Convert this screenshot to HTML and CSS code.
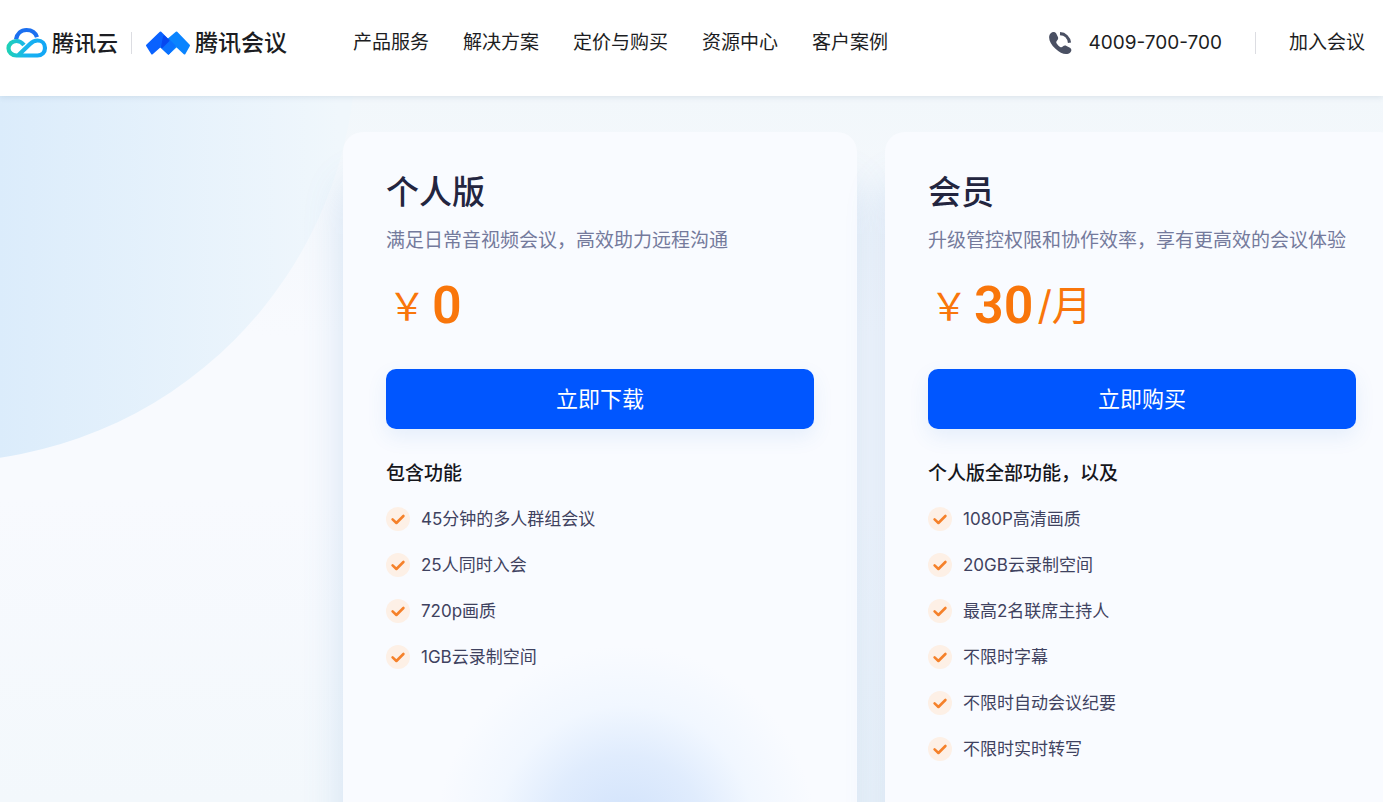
FILE: index.html
```html
<!DOCTYPE html>
<html lang="zh-CN">
<head>
  <meta charset="UTF-8">
  <meta name="viewport" content="width=device-width, initial-scale=1">
  <title>腾讯会议 - 定价与购买</title>
  <link rel="stylesheet" href="styles.css">
</head>
<body>

  <!-- shared icon -->
  <svg class="sprite" aria-hidden="true">
    <symbol id="check" viewBox="0 0 24 24">
      <circle cx="12" cy="12" r="12" fill="#fdf0e6"/>
      <path d="M6.600 12.400l3.800 3.600 7-7" fill="none" stroke="#f5812a" stroke-width="2.600" stroke-linecap="round" stroke-linejoin="round"/>
    </symbol>
  </svg>

  <header class="header">
    <div class="brand">
      <a class="logo" href="#">
        <svg width="42" height="32" viewBox="0 0 42 32" aria-hidden="true">
          <defs>
            <linearGradient id="cloudSide" x1="0" y1="0" x2="1" y2="0">
              <stop offset="0" stop-color="#1fd0b8"/>
              <stop offset="0.5" stop-color="#18b4f0"/>
              <stop offset="1" stop-color="#12a6f5"/>
            </linearGradient>
          </defs>
          <path d="M10 12.500C11 6.500 15 3 20.500 3c5.200 0 9 2.500 10.500 7.200" fill="none" stroke="#1b6ff0" stroke-width="4.200"/>
          <path d="M18 18c-2-2.500-4.500-4-7.500-4-4.500 0-8 3.200-8 7.300s3.500 7.200 8 7.200h21c4.500 0 7.500-3.300 7.500-7.500s-3-7.500-7.500-7.500c-3 0-5 1-7.500 3.500L12 28.500" fill="none" stroke="url(#cloudSide)" stroke-width="4.200"/>
        </svg>
        <span class="logo-cloud">腾讯云</span>
      </a>
      <span class="divider"></span>
      <a class="logo" href="#">
        <svg width="46" height="26" viewBox="0 0 46 26" stroke-width="2" stroke-linejoin="round" aria-hidden="true">
          <path d="M31.500 2.500L44 15.500 39.500 23.500 31.500 16 23.500 23.500 15.500 16z" fill="#0a84ff" stroke="#0a84ff"/>
          <path d="M15.500 2.500L29 16 23.500 23.500 15.500 16 7 23.500 2 15.500z" fill="#0a62ff" stroke="#0a62ff"/>
          <path d="M23.500 10l6 6-6 7.500-7.500-7z" fill="#0a72ff" stroke="#0a72ff"/>
          <path d="M19 6.500l4.500 4-6.500 6.500z" fill="#0648f0" stroke="#0648f0"/>
        </svg>
        <span class="logo-meeting">腾讯会议</span>
      </a>
    </div>

    <nav class="nav">
      <a href="#">产品服务</a>
      <a href="#">解决方案</a>
      <a href="#">定价与购买</a>
      <a href="#">资源中心</a>
      <a href="#">客户案例</a>
    </nav>

    <div class="actions">
      <a class="phone" href="tel:4009700700">
        <svg width="24" height="24" viewBox="0 0 24 24" aria-hidden="true">
          <path d="M2.500 2.500C4.500.6 7 .6 8.200 2.600l1.600 3.200c.8 1.600.3 2.900-.9 4-.8.800-.8 1.700-.2 2.700 1 1.600 2 2.600 3.400 3.400 1 .6 1.900.5 2.700-.3 1-1.100 2.300-1.400 3.700-.7l3 1.500c2.200 1.200 2.500 3.300.8 5-3.300 3.200-9.300 1.700-14.800-3.700C1.500 12.500-.5 6 2.500 2.500z" fill="#4a5063"/>
          <path d="M12 2.700c5 .2 8.800 3.800 9.500 9" fill="none" stroke="#4a5063" stroke-width="3.200"/>
        </svg>
        <span>4009-700-700</span>
      </a>
      <span class="divider"></span>
      <a class="join" href="#">加入会议</a>
    </div>
  </header>

  <main class="pricing">
    <section class="card card-free">
      <h2>个人版</h2>
      <p class="desc">满足日常音视频会议，高效助力远程沟通</p>
      <p class="price"><span class="yen">￥</span><span class="amount">0</span></p>
      <button class="buy" type="button">立即下载</button>
      <h3>包含功能</h3>
      <ul class="features">
        <li><svg class="check"><use href="#check"/></svg>45分钟的多人群组会议</li>
        <li><svg class="check"><use href="#check"/></svg>25人同时入会</li>
        <li><svg class="check"><use href="#check"/></svg>720p画质</li>
        <li><svg class="check"><use href="#check"/></svg>1GB云录制空间</li>
      </ul>
    </section>

    <section class="card">
      <h2>会员</h2>
      <p class="desc">升级管控权限和协作效率，享有更高效的会议体验</p>
      <p class="price"><span class="yen">￥</span><span class="amount">30</span><span class="unit">/月</span></p>
      <button class="buy" type="button">立即购买</button>
      <h3>个人版全部功能，以及</h3>
      <ul class="features">
        <li><svg class="check"><use href="#check"/></svg>1080P高清画质</li>
        <li><svg class="check"><use href="#check"/></svg>20GB云录制空间</li>
        <li><svg class="check"><use href="#check"/></svg>最高2名联席主持人</li>
        <li><svg class="check"><use href="#check"/></svg>不限时字幕</li>
        <li><svg class="check"><use href="#check"/></svg>不限时自动会议纪要</li>
        <li><svg class="check"><use href="#check"/></svg>不限时实时转写</li>
      </ul>
    </section>
  </main>

</body>
</html>
```
FILE: styles.css
```css
:root {
  --blue: #0056ff;
  --orange: #f9760b;
  --ink: #23253f;
  --text: #3f4260;
  --muted: #747a9c;
}

* {
  box-sizing: border-box;
}

body {
  display: flex;
  flex-direction: column;
  min-height: 100vh;
  margin: 0;
  font-family: Inter, "Noto Sans CJK SC", sans-serif;
  line-height: 28px;
  color: var(--text);
  background: #f6fafe;
}

h2, h3, p, ul {
  margin: 0;
  padding: 0;
}

a {
  color: inherit;
  text-decoration: none;
}

.sprite {
  position: absolute;
  width: 0;
  height: 0;
}

/* header */
.header {
  position: relative;
  z-index: 1;
  display: flex;
  align-items: center;
  height: 96px;
  padding: 0 18px 10px 6px;
  font-size: 19px;
  color: #1c1d22;
  background: #fff;
  box-shadow: 0 1px 6px rgba(60, 90, 120, 0.14);
}

.brand {
  display: flex;
  align-items: center;
  gap: 13px;
  width: 347px;
}

.logo {
  display: flex;
  align-items: center;
  gap: 4px;
  font-weight: 500;
}

.logo-cloud {
  font-size: 22px;
}

.logo-meeting {
  font-size: 23px;
}

.divider {
  width: 1px;
  height: 22px;
  background: #dcdde2;
}

.nav {
  display: flex;
  gap: 34px;
}

.actions {
  display: flex;
  align-items: center;
  gap: 33px;
  margin-left: auto;
}

.phone {
  display: flex;
  align-items: center;
  gap: 16px;
}

/* pricing */
.pricing {
  position: relative;
  flex: 1;
  display: grid;
  grid-template-columns: repeat(2, minmax(514px, 1fr));
  gap: 28px;
  padding: 36px 0 0 343px;
  overflow: hidden;
  background: linear-gradient(#f2f7fb, #f8fafe 240px, #f8fafe 400px, #f3f8fc);
}

.pricing::before {
  content: "";
  position: absolute;
  top: -466px;
  left: -476px;
  width: 832px;
  height: 832px;
  border-radius: 50%;
  background: linear-gradient(90deg, #dbecfb 57%, #f0f7fc 98%);
}

.card {
  position: relative;
  padding: 38px 43px 0;
  border-radius: 20px 20px 0 0;
  background: #f9fbff;
  box-shadow: 0 50px 40px rgba(80, 140, 205, 0.2);
}

.card-free {
  background: radial-gradient(circle at 55% 105%, #cfe1fb 0, #e0ecfd 80px, #f1f7ff 130px, #f9fbff 190px);
}

.card h2 {
  font-size: 33px;
  font-weight: 500;
  line-height: 44px;
  color: var(--ink);
}

.desc {
  margin-top: 13px;
  font-size: 19px;
  white-space: nowrap;
  color: var(--muted);
}

.price {
  display: flex;
  align-items: center;
  height: 64px;
  margin-top: 19px;
  line-height: 64px;
  color: var(--orange);
}

.yen {
  width: 46px;
  padding-left: 2px;
  font-size: 38px;
}

.amount {
  font-family: Roboto, sans-serif;
  font-size: 52px;
  font-weight: 600;
}

.unit {
  margin-left: 4px;
  font-size: 40px;
}

.buy {
  display: block;
  width: 100%;
  height: 60px;
  margin-top: 31px;
  border: none;
  border-radius: 10px;
  font-family: inherit;
  font-size: 22px;
  line-height: 28px;
  color: #fff;
  background: var(--blue);
  box-shadow: 0 8px 20px rgba(60, 130, 220, 0.1);
  cursor: pointer;
}

.card h3 {
  margin-top: 31px;
  font-size: 19px;
  font-weight: 500;
  color: #15161c;
}

.features {
  display: grid;
  gap: 20px;
  margin-top: 18px;
  list-style: none;
  font-size: 17px;
  line-height: 26px;
}

.features li {
  display: flex;
  align-items: center;
  gap: 11px;
}

.check {
  width: 24px;
  height: 24px;
}
```
